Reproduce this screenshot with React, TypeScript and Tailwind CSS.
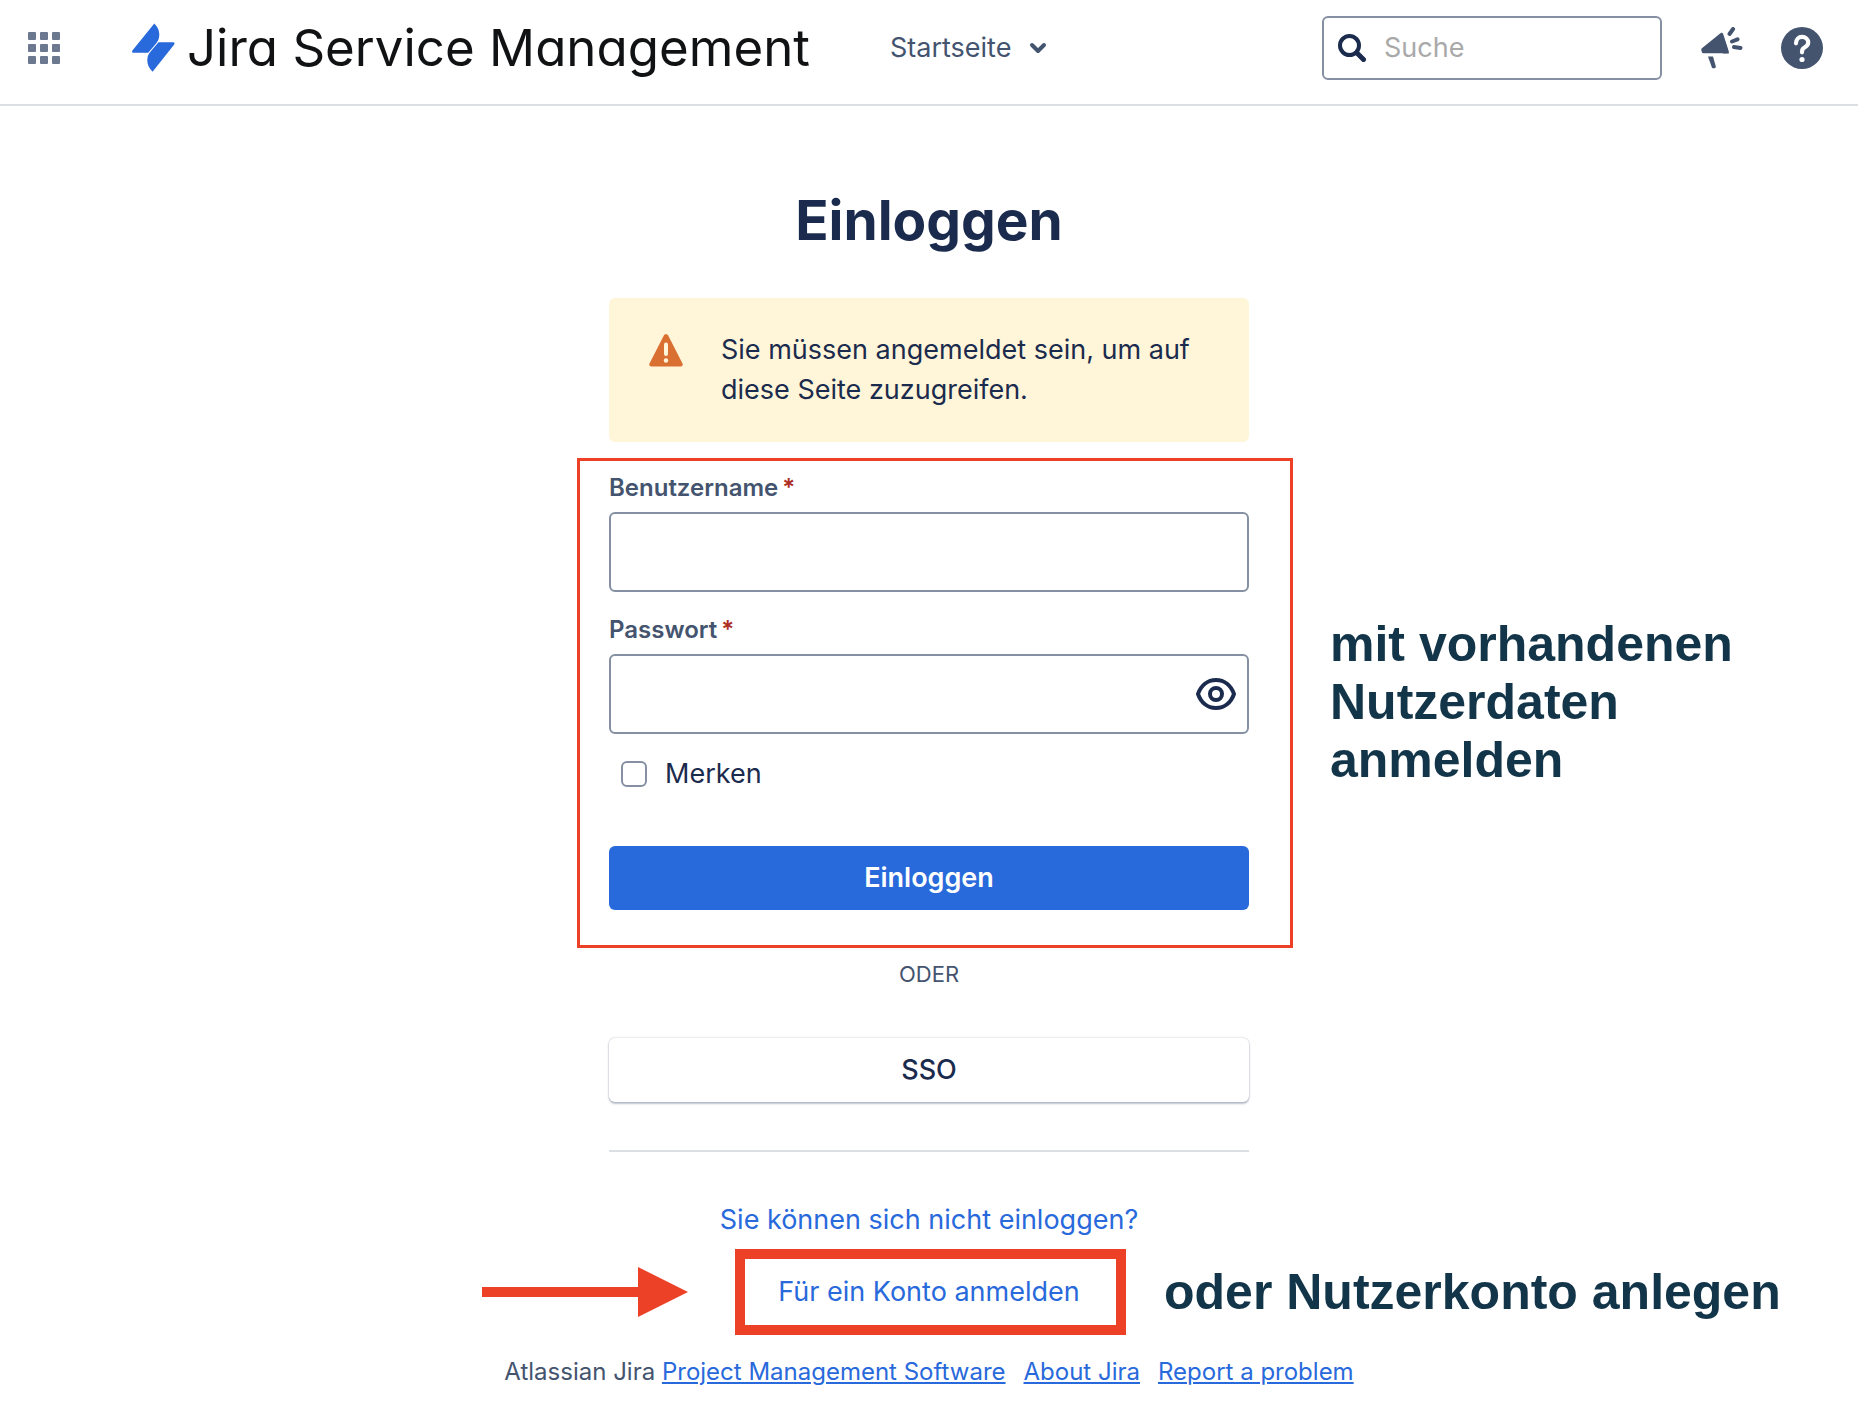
import React, { useState } from 'react';

function AppSwitcherIcon() {
    return (
        <svg width="32" height="32" viewBox="0 0 32 32" fill="currentColor" aria-hidden="true">
            {[0, 12, 24].map((y) =>
                [0, 12, 24].map((x) => (
                    <rect key={`${x}-${y}`} x={x} y={y} width="8" height="8" rx="1" />
                ))
            )}
        </svg>
    );
}

function LogoIcon() {
    return (
        <svg width="43" height="50" viewBox="0 0 43 50" fill="#2869db" aria-hidden="true">
            <path d="M22.3.4C26 4.4 27.300 7.500 27.300 12C27.300 16.500 25 19.800 22 23L16.200 29.800H1.500C.1 29.800-.4 28.500.6 27.300Z" />
            <path d="M20.600 48.800C17 45 15.300 42 15.300 37C15.300 32.500 17.500 29.500 20.500 26.300L26.500 19.200H41.200C42.600 19.200 43 20.500 42 21.700Z" />
        </svg>
    );
}

function ChevronIcon() {
    return (
        <svg width="18" height="12" viewBox="0 0 18 12" fill="none" aria-hidden="true">
            <path d="M3 3l6 6 6-6" stroke="currentColor" strokeWidth="4" strokeLinecap="round" strokeLinejoin="round" />
        </svg>
    );
}

function SearchIcon() {
    return (
        <svg width="28" height="28" viewBox="0 0 28 28" fill="none" stroke="#1b2b4d" aria-hidden="true">
            <circle cx="11.500" cy="11.500" r="9.500" strokeWidth="4" />
            <path d="M19 19l6.500 6.500" strokeWidth="5" strokeLinecap="round" />
        </svg>
    );
}

function FeedbackIcon() {
    return (
        <svg width="42" height="42" viewBox="0 0 42 42" fill="none" stroke="currentColor" aria-hidden="true">
            <path d="M20.500 7.500L26 24.500H2.500L2 22.500Z" fill="currentColor" strokeWidth="3.500" strokeLinejoin="round" />
            <path d="M20.800 5L28 26.500H22Z" fill="currentColor" stroke="none" />
            <path d="M7 29.500h5l2.800 10c.4 1.800-3.200 2.600-3.900 1Z" fill="currentColor" stroke="none" />
            <path d="M28.500 7l3.600-5M31 14.500l5.500-2.200M33 20l6.500 1" strokeWidth="4" strokeLinecap="round" />
        </svg>
    );
}

function HelpIcon() {
    return (
        <svg width="42" height="42" viewBox="0 0 42 42" fill="none" aria-hidden="true">
            <circle cx="21" cy="21" r="21" fill="currentColor" />
            <path d="M15 16.300C15 12.500 17.700 9.800 21 9.800C24.500 9.800 27.200 12.300 27.200 15.500C27.200 19 24.200 20 22.500 21.200C21.300 22 21 23 21 25.300" stroke="#fff" strokeWidth="4.200" strokeLinecap="round" />
            <circle cx="21" cy="32.500" r="2.600" fill="#fff" />
        </svg>
    );
}

function WarningIcon() {
    return (
        <svg width="34" height="33" viewBox="0 0 34 33" aria-hidden="true">
            <path d="M14.800 1.500C15.700-.2 18.300-.2 19.200 1.500L33.500 29.500C34.300 31 33.400 32.500 31.700 32.500H2.300C.6 32.500-.3 31 .5 29.500Z" fill="#d97031" />
            <path d="M17 10.500v9.500" stroke="#fff6da" strokeWidth="4" strokeLinecap="round" />
            <circle cx="17" cy="26.500" r="2.200" fill="#fff6da" />
        </svg>
    );
}

function EyeIcon() {
    return (
        <svg width="40" height="32" viewBox="0 0 40 32" fill="none" stroke="#1b2b4d" strokeWidth="4" aria-hidden="true">
            <path d="M2 16C5 7.500 11.500 2 20 2C28.500 2 35 7.500 38 16C35 24.500 28.500 30 20 30C11.500 30 5 24.500 2 16Z" strokeLinejoin="round" />
            <circle cx="20" cy="16" r="6" />
        </svg>
    );
}

function Header() {
    return (
        <header className="flex items-center justify-between border-b-2 border-[#dcdfe4] h-[106px] pt-4 pb-6 pl-7 pr-[35px] text-[#44546f]">
            <div className="flex items-center">
                <button type="button" aria-label="App-Umschalter" className="text-[#6c7890]">
                    <AppSwitcherIcon />
                </button>
                <a href="#" className="ml-[72px] flex items-center gap-3">
                    <LogoIcon />
                    <span className="whitespace-nowrap text-[51px] leading-[62px] text-[#101214] [font-feature-settings:'cv11']">
                        Jira Service Management
                    </span>
                </a>
                <button type="button" className="ml-20 flex items-center gap-[18px] text-[27px] leading-10">
                    Startseite
                    <ChevronIcon />
                </button>
            </div>
            <div className="flex items-center">
                <label className="flex h-16 w-[340px] items-center gap-[18px] rounded-md border-2 border-[#8590a2] px-3.5">
                    <SearchIcon />
                    <input
                        type="search"
                        aria-label="Suche"
                        placeholder="Suche"
                        className="min-w-0 flex-1 text-[27px] leading-10 outline-none placeholder:text-[#a9a9a9]"
                    />
                </label>
                <button type="button" aria-label="Feedback" className="ml-[39px]">
                    <FeedbackIcon />
                </button>
                <button type="button" aria-label="Hilfe" className="ml-[38px]">
                    <HelpIcon />
                </button>
            </div>
        </header>
    );
}

function FieldLabel({ htmlFor, children }: { htmlFor: string; children: React.ReactNode }) {
    return (
        <label htmlFor={htmlFor} className="mb-2 flex gap-1 text-2xl font-semibold text-[#44546f]">
            {children}
            <span className="text-[#ae2e24]">*</span>
        </label>
    );
}

const inputClass = 'h-20 w-full rounded-md border-2 border-[#8590a2] bg-white px-4 text-[27px] outline-none';
const noteClass = "absolute whitespace-nowrap font-['Liberation_Sans',Arial,sans-serif] text-[50px] font-bold leading-[58px] text-[#133549]";

function LoginForm() {
    const [showPassword, setShowPassword] = useState(false);

    return (
        <form className="relative mt-[30px]" onSubmit={(e) => e.preventDefault()}>
            <FieldLabel htmlFor="username">Benutzername</FieldLabel>
            <input id="username" type="text" required className={inputClass} />

            <div className="mt-[22px]">
                <FieldLabel htmlFor="password">Passwort</FieldLabel>
                <div className="relative">
                    <input
                        id="password"
                        type={showPassword ? 'text' : 'password'}
                        required
                        className={inputClass}
                    />
                    <button
                        type="button"
                        aria-label="Passwort anzeigen"
                        onClick={() => setShowPassword(!showPassword)}
                        className="absolute inset-y-0 right-[13px]"
                    >
                        <EyeIcon />
                    </button>
                </div>
            </div>

            <label className="mt-5 flex items-center gap-[18px] pl-3 text-[27px] leading-10">
                <input
                    type="checkbox"
                    className="size-[26px] appearance-none rounded-md border-2 border-[#8590a2] checked:bg-[#2869db]"
                />
                Merken
            </label>

            <button
                type="submit"
                className="mt-[52px] h-16 w-full rounded-md bg-[#2869db] text-[27px] font-semibold text-white"
            >
                Einloggen
            </button>

            {/* highlight around the credentials, with its note */}
            <div className="pointer-events-none absolute -top-3.5 -right-11 -bottom-[38px] -left-8 border-3 border-[#ec4126]">
                <p className={`${noteClass} left-full top-[154px] ml-10`}>
                    mit vorhandenen
                    <br />
                    Nutzerdaten
                    <br />
                    anmelden
                </p>
            </div>
        </form>
    );
}

function SignUpLink() {
    return (
        <div className="relative mt-8">
            <a href="#">Für ein Konto anmelden</a>
            <div className="pointer-events-none absolute -top-[23px] left-1/2 -ml-[194px] h-[86px] w-[391px] border-10 border-[#ec4126]">
                <svg
                    width="206"
                    height="50"
                    viewBox="0 0 206 50"
                    fill="#ec4126"
                    aria-hidden="true"
                    className="absolute right-full top-2 mr-[57px]"
                >
                    <path d="M0 20H156V0L206 25L156 50V30H0Z" />
                </svg>
                <p className={`${noteClass} left-full top-1 ml-12`}>oder Nutzerkonto anlegen</p>
            </div>
        </div>
    );
}

export default function App() {
    return (
        <div className="min-h-screen overflow-x-hidden bg-white font-[Inter,sans-serif] text-[#1b2b4d]">
            <Header />
            <main className="mx-auto w-[640px] max-w-full pt-20">
                <h1 className="text-center text-[55px] font-bold leading-[68px]">Einloggen</h1>

                <div role="alert" className="mt-11 flex gap-[38px] rounded-md bg-[#fff6da] px-10 py-8">
                    <div className="shrink-0 pt-1">
                        <WarningIcon />
                    </div>
                    <p className="text-[27px] leading-10">
                        Sie müssen angemeldet sein, um auf diese Seite zuzugreifen.
                    </p>
                </div>

                <LoginForm />

                <div className="mt-12 text-center text-[22px] leading-8 text-[#44546f]">ODER</div>

                <button
                    type="button"
                    className="mt-12 h-16 w-full rounded-md bg-white text-[27px] font-medium shadow-[0_0_2px_rgba(9,30,66,0.31),0_2px_2px_rgba(9,30,66,0.25)]"
                >
                    SSO
                </button>

                <hr className="mt-12 border-t-2 border-[#dcdfe4]" />

                <div className="mt-12 text-center text-[27px] leading-10 text-[#2869db]">
                    <a href="#">Sie können sich nicht einloggen?</a>
                    <SignUpLink />
                </div>
            </main>

            <footer className="mt-11 flex justify-center gap-[18px] text-2xl text-[#44546f]">
                <span>
                    Atlassian Jira{' '}
                    <a href="#" className="text-[#2869db] underline">Project Management Software</a>
                </span>
                <a href="#" className="text-[#2869db] underline">About Jira</a>
                <a href="#" className="text-[#2869db] underline">Report a problem</a>
            </footer>
        </div>
    );
}
